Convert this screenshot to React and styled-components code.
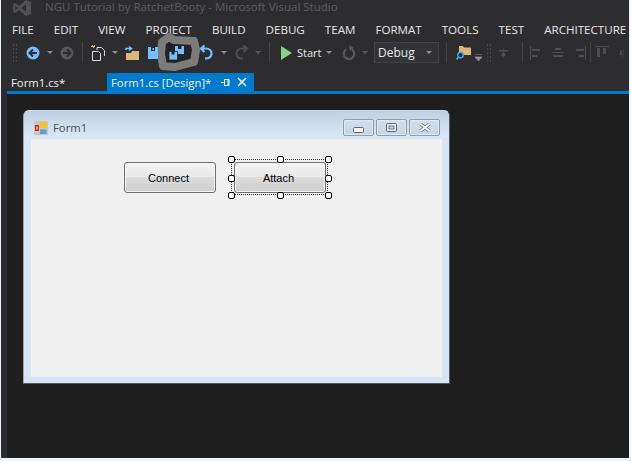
import React from 'react';
import styled, { createGlobalStyle } from 'styled-components';

const GlobalStyle = createGlobalStyle`
  html, body { margin: 0; padding: 0; height: 100%; background: #2d2d30; }
  #root { height: 100%; }
`;

const Shell = styled.div`
  position: relative;
  box-sizing: border-box;
  width: 631px;
  height: 461px;
  display: flex;
  flex-direction: column;
  overflow: hidden;
  background: #2d2d30;
  border-left: 1px solid #e8f1f8;
  border-right: 2px solid #eef5fb;
  border-bottom: 3px solid #eef5fb;
  font-family: "Open Sans", "Liberation Sans", sans-serif;
`;

const TitleBar = styled.div`
  height: 19px;
  display: flex;
  align-items: flex-start;
  padding-left: 11px;
  gap: 13px;
`;

const TitleText = styled.span`
  font-size: 11.5px;
  line-height: 13px;
  color: #5c5c5f;
  white-space: nowrap;
`;

const MenuBar = styled.div`
  height: 20px;
  display: flex;
  align-items: center;
  padding-left: 11px;
  gap: 20px;
`;

const MenuItem = styled.span`
  font-size: 11.6px;
  color: #e6e6e6;
  white-space: nowrap;
`;

const Toolbar = styled.div`
  height: 25px;
  margin-top: 1px;
  display: flex;
  align-items: center;
  padding-left: 11px;
  & > * { flex: none; }
`;

const Grip = styled.div`
  width: 7px;
  height: 20px;
  margin-left: ${p => p.$left || 0}px;
  background-image: radial-gradient(#46464a 1px, transparent 1px);
  background-size: 3px 4px;
`;

const Slot = styled.div`
  position: relative;
  z-index: 1;
  display: flex;
  align-items: center;
  justify-content: center;
  width: ${p => p.$w}px;
  height: 20px;
  margin-left: ${p => p.$left || 0}px;
`;

const Caret = styled.div`
  width: 0;
  height: 0;
  margin-left: ${p => p.$left}px;
  border-left: 3px solid transparent;
  border-right: 3px solid transparent;
  border-top: 3px solid ${p => p.$dim ? '#5a5a5c' : '#8f8f92'};
`;

const Separator = styled.div`
  width: 1px;
  height: 21px;
  margin-left: ${p => p.$left}px;
  background: #434346;
`;

const StartLabel = styled.span`
  width: 24px;
  margin-left: 5px;
  font-size: 11px;
  color: #e6e6e6;
`;

const Combo = styled.div`
  box-sizing: border-box;
  width: 65px;
  height: 21px;
  margin-left: ${p => p.$left}px;
  padding: 0 6px 0 3px;
  display: flex;
  align-items: center;
  justify-content: space-between;
  background: #333337;
  border: 1px solid #434346;
  font-size: 12px;
  color: #e6e6e6;
`;

const TabStrip = styled.div`
  height: 18px;
  margin-top: 8px;
  display: flex;
  align-items: stretch;
  padding-left: 6px;
`;

const Tab = styled.div`
  display: flex;
  align-items: center;
  box-sizing: border-box;
  width: ${p => p.$w}px;
  padding-left: 4px;
  font-size: 11.3px;
  color: #f1f1f1;
  white-space: nowrap;
  background: ${p => p.$active ? '#007acc' : 'transparent'};
`;

const TabIcon = styled.svg`
  flex: none;
  margin-left: ${p => p.$left}px;
`;

const Surface = styled.div`
  flex: 1;
  margin-left: 6px;
  padding: 16px;
  background: #1e1e1e;
  border-top: 3px solid #007acc;
`;

const FormWindow = styled.div`
  box-sizing: border-box;
  width: 427px;
  height: 274px;
  display: flex;
  flex-direction: column;
  background: #d6e4f3;
  border: 1px solid #5a5a5a;
  border-top-color: #d4d9de;
  border-left-color: #9aa3ab;
  border-radius: 6px 6px 0 0;
`;

const FormCaption = styled.div`
  box-sizing: border-box;
  height: 27px;
  padding: 6px 9px 0 10px;
  display: flex;
  align-items: center;
  background: linear-gradient(#c0d0e0, #dbe8f6);
  border-radius: 5px 5px 0 0;
`;

const FormTitle = styled.span`
  flex: 1;
  margin-left: 5px;
  font-size: 11.3px;
  color: #4a4f57;
`;

const CaptionButtons = styled.div`
  display: flex;
  gap: 2px;
`;

const CaptionButton = styled.div`
  box-sizing: border-box;
  width: 31px;
  height: 17px;
  display: flex;
  align-items: center;
  justify-content: center;
  border: 1px solid #8d9cae;
  border-radius: 2px;
  background: linear-gradient(#d3dfeb, #c6d4e2);
  box-shadow: inset 0 0 0 1px #dfe8f1;
`;

const FormClient = styled.div`
  flex: 1;
  margin: 1px 7px 6px;
  padding: 23px 0 0 93px;
  display: flex;
  gap: 18px;
  align-items: flex-start;
  background: #f0f0f0;
`;

const Selected = styled.div`
  position: relative;
`;

const PushButton = styled.div`
  box-sizing: border-box;
  width: 92px;
  height: 31px;
  padding-right: 3px;
  display: flex;
  align-items: center;
  justify-content: center;
  border: 1px solid #707070;
  border-radius: 3px;
  background: linear-gradient(#f3f3f3 0%, #e9e9e9 48%, #dcdcdc 50%, #cfcfcf 100%);
  box-shadow: inset 0 0 0 1px #f6f6f6;
  font-family: "Liberation Sans", Arial, sans-serif;
  font-size: 11px;
  color: #000;
`;

const DottedFrame = styled.div`
  position: absolute;
  inset: -3px -2px -2px -3px;
  border: 1px dotted #333;
`;

const Handle = styled.div`
  position: absolute;
  left: ${p => p.$x - 3}px;
  top: ${p => p.$y - 3}px;
  box-sizing: border-box;
  width: 7px;
  height: 7px;
  background: #fff;
  border: 1px solid #000;
  border-radius: 2px;
`;

const Scribble = styled.svg`
  position: absolute;
  z-index: 0;
  left: 150px;
  top: 28px;
  pointer-events: none;
`;

const LogoIcon = () => (
  <svg width="20" height="16" viewBox="0 0 20 16">
    <path fill="#505053" d="M14 0l5 2v12l-5 2-7-6-4 3-2-1V4l2-1 4 3zM3 5.500v5L5.500 8zM14 4.500L9.500 8l4.500 3.500z" />
  </svg>
);

const BackIcon = ({ color, dir }) => (
  <svg width="14" height="14" viewBox="0 0 14 14">
    <circle cx="7" cy="7" r="6.500" fill={color} />
    <path
      d={dir === 'left' ? 'M7 3.500L3.500 7 7 10.500M4 7h7' : 'M7 3.500L10.500 7 7 10.500M3 7h7'}
      fill="none" stroke="#2d2d30" strokeWidth="2"
    />
  </svg>
);

const NewProjectIcon = () => (
  <svg width="14" height="16" viewBox="0 0 14 16">
    <path d="M1 0h1v1h1V0h1v2H3v1H2V2H0V1h1z" fill="#e8b35f" />
    <path d="M6 2.500h4.500l3 3v5.500M6 2.500V5" fill="none" stroke="#d8d8d8" />
    <path d="M1.500 6.500h6l2 2v7h-8z" fill="#2d2d30" stroke="#d8d8d8" />
  </svg>
);

const OpenIcon = () => (
  <svg width="15" height="16" viewBox="0 0 15 16">
    <path d="M1 8h5l1-2h7v9H1z" fill="#dcb67a" />
    <path d="M1 5V3.500h5M4 1.500L6.500 3.500 4 5.500" fill="none" stroke="#75beff" strokeWidth="1.600" />
  </svg>
);

const FloppyIcon = () => (
  <svg width="10" height="12" viewBox="0 0 10 12">
    <path d="M0 0h10v12H0z" fill="#75beff" />
    <path d="M3 0h4v4H3z" fill="#2d2d30" />
    <path d="M4.500 1h1.500v2H4.500z" fill="#75beff" />
  </svg>
);

const SaveAllIcon = () => (
  <svg width="15" height="14" viewBox="0 0 15 14">
    <path d="M6 0h9v8H6z" fill="#75beff" />
    <path d="M9 0h3.500v3H9z" fill="#232325" />
    <path d="M0 5.500h8.500v8.500H0z" fill="#75beff" stroke="#232325" strokeWidth="0.800" />
    <path d="M2.500 5.500h3v3h-3z" fill="#232325" />
  </svg>
);

const UndoIcon = ({ color, flip }) => (
  <svg width="14" height="15" viewBox="0 0 14 15" style={flip ? { transform: 'scaleX(-1)' } : undefined}>
    <path d="M6 13.500c5 0 6.500-2.500 6.500-5S10.500 3.500 7 3.500H2M5.500 0.500L2 3.500l3.500 3.500" fill="none" stroke={color} strokeWidth="2.200" />
  </svg>
);

const PlayIcon = () => (
  <svg width="11" height="14" viewBox="0 0 11 14">
    <path d="M0 0l11 7-11 7z" fill="#89d185" />
  </svg>
);

const RefreshIcon = () => (
  <svg width="14" height="15" viewBox="0 0 14 15">
    <path d="M4 4.500a5.200 5.200 0 1 0 6 0" fill="none" stroke="#58585a" strokeWidth="2.200" />
    <path d="M7.500 0v6l4-3z" fill="#58585a" />
  </svg>
);

const FindIcon = () => (
  <svg width="15" height="17" viewBox="0 0 15 17">
    <path d="M3 2h4l1 1.500h7V11H3z" fill="#dcb67a" />
    <circle cx="4.500" cy="11" r="2.800" fill="#2d2d30" stroke="#4aa6f0" strokeWidth="1.400" />
    <path d="M2.500 13L0.500 15.500" stroke="#4aa6f0" strokeWidth="1.600" />
  </svg>
);

const SmallCaret = () => (
  <svg width="7" height="8" viewBox="0 0 7 8" style={{ marginTop: 10 }}>
    <path d="M0 0h7M0 3h7l-3.500 4z" stroke="#8f8f92" strokeWidth="0.800" fill="#8f8f92" />
  </svg>
);

// dim layout-toolbar glyphs, all share the same colour
const AlignIcon = ({ kind }) => {
  const shapes = {
    center: 'M5 1h1v12H5zM0 3h11v2H0zM3 7h5v4H3z',
    left: 'M0 0h1v14H0zM2 3h8v2H2zM2 9h5v2H2z',
    middle: 'M0 6h12v1H0zM3 2h6v2H3zM1 9h10v2H1z',
    right: 'M12 0h1v14h-1zM3 3h8v2H3zM6 9h5v2H6z',
    top: 'M0 0h14v1H0zM2 2h3v9H2zM8 2h3v6H8z',
    vcenter: 'M0 2h3v9H0zM5 0h1v14H5z',
  };
  return (
    <svg width="14" height="14" viewBox="0 0 14 14">
      <path d={shapes[kind]} fill="#4e4e51" />
    </svg>
  );
};

const FormIcon = () => (
  <svg width="14" height="14" viewBox="0 0 14 14">
    <path d="M0 0h14v14H0z" fill="#c9c5c2" />
    <path d="M1 4h4v6H1z" fill="#c8281e" />
    <path d="M2 5.500h2v3H2z" fill="#e9a09a" />
    <path d="M6 1h7v6H6z" fill="#f4c430" />
    <path d="M6 8.500h6.500v4.500H6z" fill="#5b9be0" />
  </svg>
);

const MinGlyph = () => (
  <svg width="11" height="6" viewBox="0 0 11 6" style={{ marginTop: 4 }}>
    <rect x="0.500" y="0.500" width="10" height="5" rx="1" fill="#f2f2f2" stroke="#5d6772" />
  </svg>
);

const MaxGlyph = () => (
  <svg width="11" height="9" viewBox="0 0 11 9">
    <rect x="0.500" y="0.500" width="10" height="8" rx="1" fill="#e6ebf0" stroke="#5d6772" />
    <rect x="3" y="3" width="5" height="3" fill="#c6d4e2" stroke="#5d6772" strokeWidth="0.800" />
  </svg>
);

const CloseGlyph = () => (
  <svg width="12" height="9" viewBox="0 0 12 9">
    <path d="M1.500 1l9 7M10.500 1l-9 7" stroke="#6c7680" strokeWidth="3.400" />
    <path d="M1.500 1l9 7M10.500 1l-9 7" stroke="#f4f4f4" strokeWidth="1.800" />
  </svg>
);

const menuItems = ['FILE', 'EDIT', 'VIEW', 'PROJECT', 'BUILD', 'DEBUG', 'TEAM', 'FORMAT', 'TOOLS', 'TEST', 'ARCHITECTURE'];

const handles = [
  [-3, -3], [46, -3], [94, -3],
  [-3, 16], [94, 16],
  [-3, 33], [46, 33], [94, 33],
];

const App = () => {
  return (
    <Shell>
      <GlobalStyle />
      <TitleBar>
        <LogoIcon />
        <TitleText>NGU Tutorial by RatchetBooty - Microsoft Visual Studio</TitleText>
      </TitleBar>
      <MenuBar>
        {menuItems.map(item => <MenuItem key={item}>{item}</MenuItem>)}
      </MenuBar>
      <Toolbar>
        <Grip />
        <Slot $w={14} $left={7}><BackIcon color="#75beff" dir="left" /></Slot>
        <Caret $left={7} />
        <Slot $w={14} $left={7}><BackIcon color="#57575a" dir="right" /></Slot>
        <Separator $left={8} />
        <Slot $w={14} $left={8}><NewProjectIcon /></Slot>
        <Caret $left={7} />
        <Slot $w={15} $left={7}><OpenIcon /></Slot>
        <Slot $w={10} $left={8}><FloppyIcon /></Slot>
        <Slot $w={15} $left={11}><SaveAllIcon /></Slot>
        <Slot $w={14} $left={15}><UndoIcon color="#75beff" /></Slot>
        <Caret $left={8} />
        <Slot $w={14} $left={8}><UndoIcon color="#4e4e51" flip /></Slot>
        <Caret $left={6} $dim />
        <Separator $left={8} />
        <Slot $w={11} $left={11}><PlayIcon /></Slot>
        <StartLabel>Start</StartLabel>
        <Caret $left={5} />
        <Slot $w={14} $left={10}><RefreshIcon /></Slot>
        <Caret $left={6} $dim />
        <Combo $left={6}>
          Debug
          <Caret $left={0} />
        </Combo>
        <Separator $left={7} />
        <Slot $w={15} $left={9}><FindIcon /></Slot>
        <Slot $w={7} $left={4}><SmallCaret /></Slot>
        <Grip $left={4} />
        <Slot $w={11} $left={6}><AlignIcon kind="center" /></Slot>
        <Separator $left={12} />
        <Slot $w={14} $left={7}><AlignIcon kind="left" /></Slot>
        <Slot $w={14} $left={8}><AlignIcon kind="middle" /></Slot>
        <Slot $w={14} $left={7}><AlignIcon kind="right" /></Slot>
        <Separator $left={3} />
        <Slot $w={14} $left={4}><AlignIcon kind="top" /></Slot>
        <Slot $w={8} $left={11}><AlignIcon kind="vcenter" /></Slot>
      </Toolbar>
      <TabStrip>
        <Tab $w={100}>Form1.cs*</Tab>
        <Tab $w={147} $active>
          Form1.cs [Design]*
          <TabIcon $left={10} width="9" height="9" viewBox="0 0 9 9">
            <path d="M0 4.500h3M3.500 1.500h4.500v6H3.500zM7 2v5" fill="none" stroke="#fff" />
          </TabIcon>
          <TabIcon $left={7} width="10" height="10" viewBox="0 0 10 10">
            <path d="M1 1l8 8M9 1L1 9" stroke="#fff" strokeWidth="1.500" />
          </TabIcon>
        </Tab>
      </TabStrip>
      <Surface>
        <FormWindow>
          <FormCaption>
            <FormIcon />
            <FormTitle>Form1</FormTitle>
            <CaptionButtons>
              <CaptionButton><MinGlyph /></CaptionButton>
              <CaptionButton><MaxGlyph /></CaptionButton>
              <CaptionButton><CloseGlyph /></CaptionButton>
            </CaptionButtons>
          </FormCaption>
          <FormClient>
            <PushButton>Connect</PushButton>
            <Selected>
              <PushButton>Attach</PushButton>
              <DottedFrame />
              {handles.map(([x, y]) => <Handle key={`${x}-${y}`} $x={x} $y={y} />)}
            </Selected>
          </FormClient>
        </FormWindow>
      </Surface>
      {/* grey marker circle someone drew over the save-all button */}
      <Scribble width="60" height="50" viewBox="0 0 60 50">
        <path
          d="M11 14L18 9L23 12L43 13L45 22L43 34L24 39L12 38L10 26Z"
          fill="#232325" stroke="#7b7b7b" strokeWidth="8" strokeLinejoin="round"
        />
      </Scribble>
    </Shell>
  );
};

export default App;
